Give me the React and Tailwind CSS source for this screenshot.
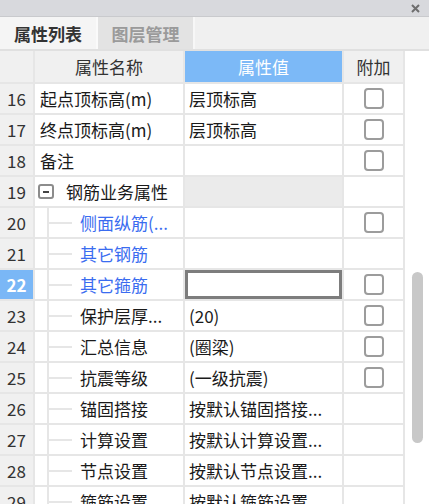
import React from 'react';

const rows = [
  { n: 16, name: '起点顶标高(m)', value: '层顶标高', check: true },
  { n: 17, name: '终点顶标高(m)', value: '层顶标高', check: true },
  { n: 18, name: '备注', value: '', check: true },
  { n: 19, name: '钢筋业务属性', group: true },
  { n: 20, name: '侧面纵筋(...', value: '', check: true, child: true, blue: true },
  { n: 21, name: '其它钢筋', value: '', child: true, blue: true },
  { n: 22, name: '其它箍筋', value: '', check: true, child: true, blue: true, active: true },
  { n: 23, name: '保护层厚...', value: '(20)', check: true, child: true },
  { n: 24, name: '汇总信息', value: '(圈梁)', check: true, child: true },
  { n: 25, name: '抗震等级', value: '(一级抗震)', check: true, child: true },
  { n: 26, name: '锚固搭接', value: '按默认锚固搭接...', child: true },
  { n: 27, name: '计算设置', value: '按默认计算设置...', child: true },
  { n: 28, name: '节点设置', value: '按默认节点设置...', child: true },
  { n: 29, name: '箍筋设置', value: '按默认箍筋设置...', child: true },
];

const cell = 'border-r-2 border-b-2 border-[#e6e6e6] flex items-center shrink-0';

const Checkbox = () => (
  <div className="w-5 h-[21px] rounded-[4px] border-2 border-[#9c9c9c] bg-white" />
);

const Row = ({ r }) => (
  <div className="flex h-[31px] shrink-0">
    <div className={`${cell} w-[35px] justify-center ${r.active ? 'bg-[#7ab7f6] text-white font-bold' : 'bg-[#f0f0f0] text-[#333]'}`}>
      {r.n}
    </div>
    <div className={`${cell} w-[150px] relative`}>
      {r.child && (
        <>
          <div className="absolute left-[12px] top-0 bottom-[-2px] w-[2px] bg-[#e6e6e6]" />
          <div className="absolute left-[13px] top-[14px] w-[24px] h-[2px] bg-[#e6e6e6]" />
        </>
      )}
      {r.group ? (
        <div className="flex items-center pl-[3px]">
          <div className="w-[16px] h-[15px] rounded-[3px] border-2 border-[#8c8c8c] flex items-center justify-center">
            <div className="w-[6px] h-[2px] bg-[#444]" />
          </div>
          <span className="ml-[12px] text-[#1a1a1a]">{r.name}</span>
        </div>
      ) : (
        <span className={`${r.child ? 'pl-[45px]' : 'pl-[5px]'} whitespace-nowrap ${r.blue ? 'text-[#3a6cf0]' : 'text-[#1a1a1a]'}`}>
          {r.name}
        </span>
      )}
    </div>
    <div className={`${cell} w-[159px] ${r.group ? 'bg-[#ebebeb]' : ''} relative`}>
      {r.active && <div className="absolute left-0 top-0 right-0 bottom-0 border-[3px] border-[#7d7d7d]" />}
      <span className="pl-[4px] whitespace-nowrap text-[#1a1a1a]">{r.value}</span>
    </div>
    <div className={`${cell} w-[61px] justify-center`}>{r.check && <Checkbox />}</div>
  </div>
);

export default function App() {
  return (
    <div
      className="w-[429px] h-[504px] overflow-hidden bg-white flex flex-col text-[17px] leading-none"
      style={{ fontFamily: '"Microsoft YaHei", "Noto Sans CJK SC", "Noto Sans", sans-serif' }}
    >
      <div className="h-[17px] shrink-0 bg-[#d8d9dd] border-b border-[#c9cacd] flex items-center justify-end pr-[9px]">
        <svg width="9" height="9" viewBox="0 0 9 9">
          <path d="M1 1 L8 8 M8 1 L1 8" stroke="#6e6e6e" strokeWidth="2" />
        </svg>
      </div>
      <div className="h-[34px] shrink-0 flex bg-[#f0f0f0] border-b-2 border-[#e0e0e0]">
        <div className="w-[98px] bg-[#f5f5f5] border-r-2 border-[#fafafa] flex items-center justify-center font-bold text-[#333]">
          属性列表
        </div>
        <div className="w-[97px] bg-[#e3e3e3] border-r-2 border-[#f7f7f7] flex items-center justify-center font-bold text-[#9a9a9a]">
          图层管理
        </div>
        <div className="flex-1" />
      </div>
      <div className="flex flex-1 min-h-0 overflow-hidden">
        <div className="w-[405px] shrink-0 flex flex-col">
          <div className="flex h-[33px] shrink-0">
            <div className={`${cell} w-[35px] bg-[#f0f0f0]`} />
            <div className={`${cell} w-[150px] bg-[#f0f0f0] justify-center text-[#333]`}>属性名称</div>
            <div className={`${cell} w-[159px] bg-[#7cb9f7] justify-center text-white`}>属性值</div>
            <div className={`${cell} w-[61px] bg-[#f0f0f0] justify-center text-[#333]`}>附加</div>
          </div>
          {rows.map((r) => (
            <Row key={r.n} r={r} />
          ))}
        </div>
        <div className="flex-1 bg-white">
          <div className="mt-[221px] ml-[7px] w-[11px] h-[171px] rounded-full bg-[#c8c8c8]" />
        </div>
      </div>
    </div>
  );
}
